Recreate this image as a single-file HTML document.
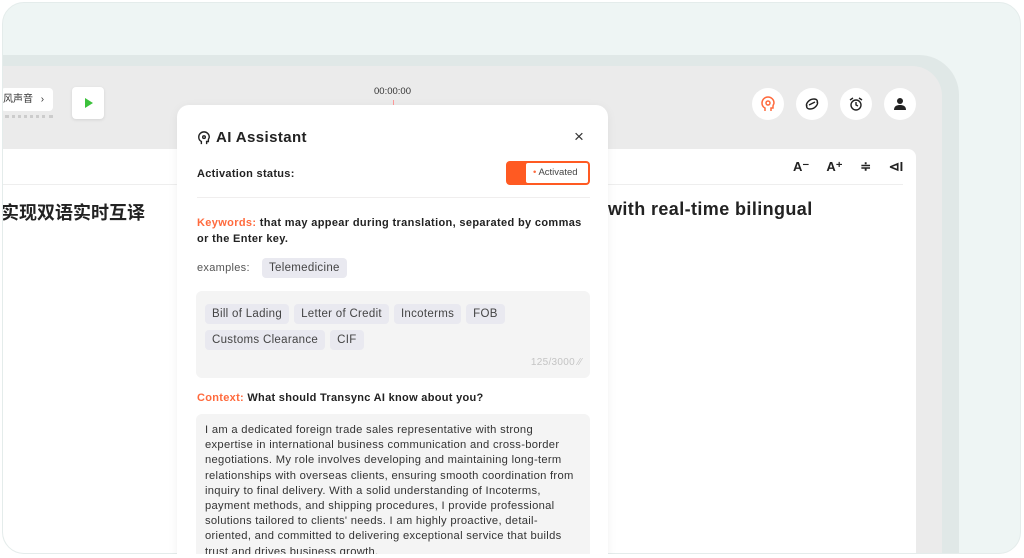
<!DOCTYPE html>
<html style="width:1024px;height:558px;overflow:hidden"><head><meta charset="utf-8"><style>
*{margin:0;padding:0;box-sizing:border-box}
body{width:1024px;height:558px;background:#fff;position:relative;overflow:hidden;font-family:"Liberation Sans","Noto Sans CJK SC",sans-serif;color:#222}
.outer{position:absolute;left:2px;top:2px;width:1019px;height:552px;border-radius:22px;background:#eef5f4;border:1px solid #e4eceb;overflow:hidden}
.bezel{position:absolute;left:0;top:52px;width:956px;height:500px;background:#e0e8e7;border-top-right-radius:40px}
.screen{position:absolute;left:0;top:63px;width:939px;height:489px;background:#ebebeb;border-top-right-radius:30px}
.panel{position:absolute;left:0;top:146px;width:913px;height:406px;background:#fff;border-top-right-radius:8px}
.abs{position:absolute}
.circ{position:absolute;width:32px;height:32px;border-radius:50%;background:#fff;display:flex;align-items:center;justify-content:center}
.modal{position:absolute;left:177px;top:105px;width:431px;height:453px;background:#fff;border-radius:12px 12px 0 0;box-shadow:0 2px 10px rgba(0,0,0,.06);overflow:hidden}
.tag{display:inline-block;background:#e9e9f0;border-radius:4px;padding:0 7px;height:20px;line-height:20px;font-size:11.5px;color:#444;margin-right:5px;letter-spacing:.3px}
.or{color:#ff6a3d}
</style></head><body>
<div class="outer">
<div class="bezel"></div>
<div class="screen"></div>
<div class="abs" style="left:-2px;top:85px;width:52px;height:23px;background:#fff;border-radius:4px;font-size:10px;line-height:23px;padding-left:2px;color:#333">风声音 <span style="margin-left:5px">›</span></div>
<div class="abs" style="left:2px;top:112px;width:48px;height:4px;border-top:3px dotted #ccc"></div>
<div class="abs" style="left:69px;top:84px;width:32px;height:32px;background:#fff;border-radius:4px;box-shadow:0 1px 3px rgba(0,0,0,.1)"><div style="position:absolute;left:13px;top:11px;border-left:8px solid #3cc13c;border-top:5px solid transparent;border-bottom:5px solid transparent"></div></div>
<div class="abs" style="left:371px;top:83px;font-size:9.5px;color:#333">00:00:00</div>
<div class="abs" style="left:390px;top:97px;width:1px;height:6px;background:#f99"></div>
<div class="circ" style="left:749px;top:85px"><svg width="16" height="16" viewBox="0 0 16 16" fill="none" stroke="#ff6a3d" stroke-width="1.5"><path d="M5 15v-3C3 11 2 9 2 7a6 6 0 0 1 12 0c0 1-1 2-1 3v2h-2v3"/><circle cx="8" cy="7" r="2"/></svg></div>
<div class="circ" style="left:793px;top:85px"><svg width="16" height="16" viewBox="0 0 16 16" fill="none" stroke="#222" stroke-width="1.4"><path d="M3 11c-2-3 2-8 7-8 3 0 4 2 3 4M13 5c2 3-2 8-7 8-3 0-4-2-3-4M5 9l6-3"/></svg></div>
<div class="circ" style="left:837px;top:85px"><svg width="16" height="16" viewBox="0 0 16 16" fill="none" stroke="#222" stroke-width="1.4"><circle cx="8" cy="9" r="5"/><path d="M8 6v3l2 1M2 4l3-2M14 4l-3-2"/></svg></div>
<div class="circ" style="left:881px;top:85px"><svg width="14" height="14" viewBox="0 0 14 14" fill="#222"><circle cx="7" cy="4" r="3"/><path d="M1 13c0-4 3-5 6-5s6 1 6 5z"/></svg></div>
<div class="panel">
<div class="abs" style="left:0;top:35px;width:900px;height:1px;background:#eee"></div>
<div class="abs" style="left:790px;top:10px;font-size:13px;font-weight:bold;color:#222;word-spacing:14px">A⁻ A⁺ ≑ ⊲I</div>
<div class="abs" style="left:-2px;top:50px;font-size:18px;font-weight:bold;color:#222">实现双语实时互译</div>
<div class="abs" style="left:605px;top:50px;font-size:18px;font-weight:bold;color:#222;letter-spacing:.4px">with real-time bilingual</div>
</div>
</div>
<div class="modal">
<svg class="abs" style="left:20px;top:26px" width="14" height="14" viewBox="0 0 16 16" fill="none" stroke="#222" stroke-width="1.6"><path d="M5 15v-3C3 11 2 9 2 7a6 6 0 0 1 12 0c0 1-1 2-1 3v2h-2v3"/><circle cx="8" cy="7" r="1.5"/></svg>
<div class="abs" style="left:39px;top:24px;font-size:15px;font-weight:bold;letter-spacing:.4px">AI Assistant</div>
<div class="abs" style="left:397px;top:22px;font-size:17px;color:#333">×</div>
<div class="abs" style="left:20px;top:63px;font-size:11px;font-weight:bold;letter-spacing:.3px">Activation status:</div>
<div class="abs" style="left:329px;top:56px;width:84px;height:24px;background:#ff5a22;border-radius:4px"><div style="position:absolute;left:20px;top:2px;width:62px;height:20px;background:#fff;border-radius:2px;font-size:9.5px;line-height:20px;color:#444;padding-left:7px"><span class="or">•</span> Activated</div></div>
<div class="abs" style="left:20px;top:92px;width:393px;height:1px;background:#f0eeee"></div>
<div class="abs" style="left:20px;top:111px;width:395px;font-size:11px;font-weight:bold;line-height:15.5px;letter-spacing:.35px"><span class="or">Keywords:</span> that may appear during translation, separated by commas or the Enter key.</div>
<div class="abs" style="left:20px;top:153px;font-size:11px;color:#555;line-height:20px;letter-spacing:.3px">examples:</div>
<div class="abs" style="left:85px;top:153px"><span class="tag">Telemedicine</span></div>
<div class="abs" style="left:19px;top:186px;width:394px;height:87px;background:#f4f4f4;border-radius:6px">
<div style="position:absolute;left:9px;top:9px;width:385px;line-height:26px"><span class="tag">Bill of Lading</span><span class="tag">Letter of Credit</span><span class="tag">Incoterms</span><span class="tag">FOB</span><br><span class="tag">Customs Clearance</span><span class="tag">CIF</span></div>
<div style="position:absolute;right:8px;top:66px;font-size:10px;color:#c4c4c4;letter-spacing:.3px">125/3000 ⁄⁄</div>
</div>
<div class="abs" style="left:20px;top:287px;font-size:11px;font-weight:bold;letter-spacing:.3px"><span class="or">Context:</span> What should Transync AI know about you?</div>
<div class="abs" style="left:19px;top:309px;width:394px;height:144px;background:#f4f4f4;border-radius:6px 6px 0 0;overflow:hidden">
<div style="position:absolute;left:9px;top:9px;width:374px;font-size:11.2px;line-height:15.2px;color:#333;letter-spacing:.3px;height:134px;overflow:hidden">I am a dedicated foreign trade sales representative with strong expertise in international business communication and cross-border negotiations. My role involves developing and maintaining long-term relationships with overseas clients, ensuring smooth coordination from inquiry to final delivery. With a solid understanding of Incoterms, payment methods, and shipping procedures, I provide professional solutions tailored to clients' needs. I am highly proactive, detail-oriented, and committed to delivering exceptional service that builds trust and drives business growth.</div>
</div>
</div>
<div class="abs" style="left:0;top:554px;width:1024px;height:4px;background:#fff"></div>
</body></html>
